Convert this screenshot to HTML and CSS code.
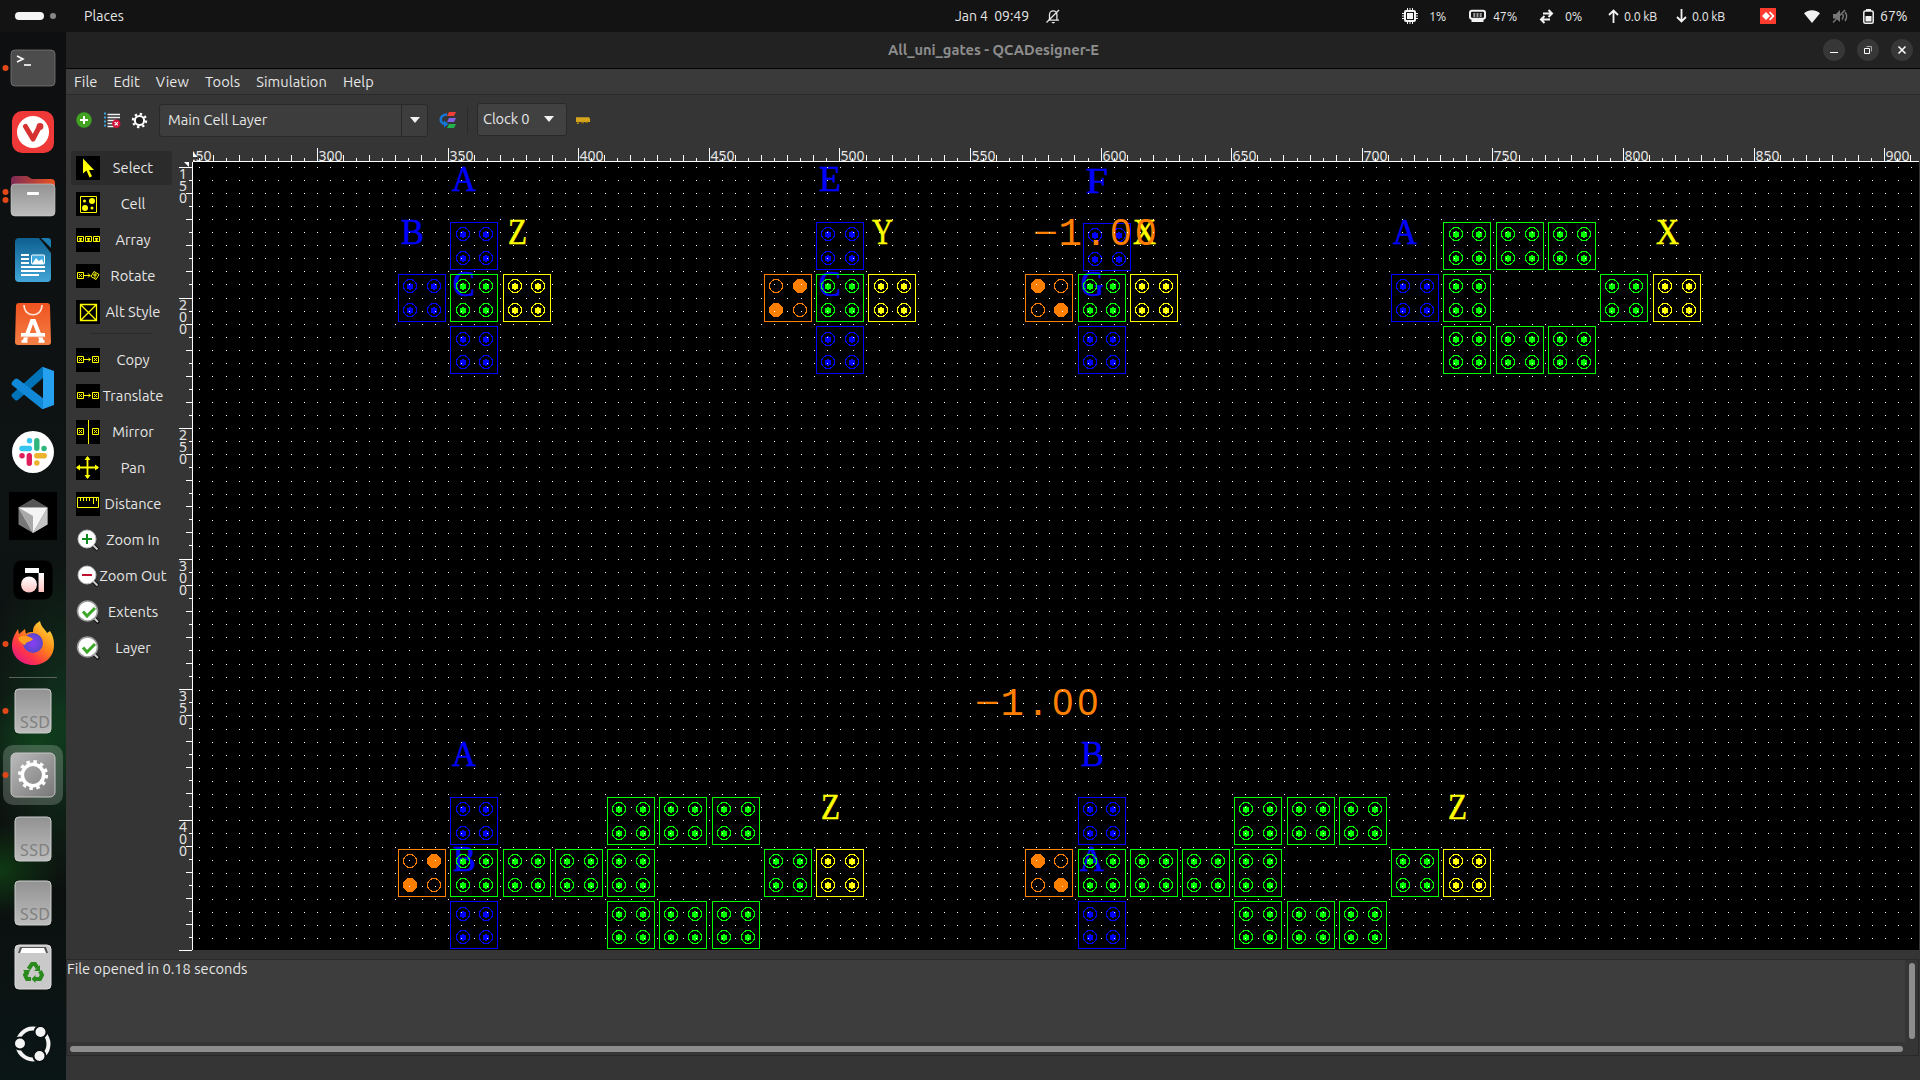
FILE: index.html
```html
<!DOCTYPE html>
<html lang="en">
<head>
<meta charset="utf-8">
<title>All_uni_gates - QCADesigner-E</title>
<link rel="stylesheet" href="styles.css">
</head>
<body>
<header class="topbar">
  <div class="top-left"><span class="pill"></span><span class="ws-dot"></span><span class="places">Places</span></div>
  <div class="top-center"><span class="clock">Jan 4 &nbsp;09:49</span>
    <svg width="16" height="16" viewBox="0 0 16 16" fill="none" stroke="#e8e8e8" stroke-width="1.3"><path d="M3 12.2h11M4.5 11.5V6.5a3.7 3.7 0 0 1 7.4 0v5M1.5 14.5L14 2"/><path d="M6.5 14h3.5a1.8 1.8 0 0 1-3.5 0z" fill="#e8e8e8" stroke="none"/></svg>
  </div>
  <div class="top-right">
    <svg class="i-cpu" width="16" height="16" viewBox="0 0 16 16"><path d="M5.5 0v16M8 0v16M10.5 0v16M0 5.5h16M0 8h16M0 10.5h16" stroke="#f2f2f2" stroke-width="1"/><rect x="2" y="2" width="12" height="12" rx="2" fill="#f2f2f2"/><rect x="4.5" y="4.5" width="7" height="7" fill="#f2f2f2" stroke="#131313"/></svg>
    <span class="t-cpu">1%</span>
    <svg class="i-mem" width="17" height="14" viewBox="0 0 17 14"><rect x="1" y="1.8" width="15" height="8" rx="2" fill="none" stroke="#f2f2f2" stroke-width="2"/><path d="M2.5 9.5h12V13h-12z" fill="#f2f2f2"/><path d="M5.3 4v4M8.5 4v4M11.7 4v4" stroke="#999" stroke-width="2"/></svg>
    <span class="t-mem">47%</span>
    <svg class="i-swap" width="15" height="15" viewBox="0 0 15 15" fill="none" stroke="#f2f2f2" stroke-width="2"><path d="M4 4.5h9M9.5 1L13 4.5 9.5 8M11 10.5H2M5.5 7L2 10.500 5.500 14"/></svg>
    <span class="t-swap">0%</span>
    <svg class="i-up" width="11" height="14" viewBox="0 0 11 14" fill="none" stroke="#f2f2f2" stroke-width="1.8"><path d="M5.500 14V1.500M1 6l4.500-4.500L10 6"/></svg>
    <span class="t-up">0.0 kB</span>
    <svg class="i-down" width="11" height="14" viewBox="0 0 11 14" fill="none" stroke="#f2f2f2" stroke-width="1.800"><path d="M5.500 0v12.500M1 8l4.500 4.500L10 8"/></svg>
    <span class="t-down">0.0 kB</span>
    <svg class="i-any" width="16" height="16" viewBox="0 0 16 16"><rect width="16" height="16" fill="#ff3b30"/><path d="M2 8l4-4 4 4-4 4zM9 4.500l1.300-1L14.500 8l-4.200 4.500-1.300-1L12 8z" fill="#fff"/></svg>
    <svg class="i-wifi" width="16" height="13" viewBox="0 0 16 13"><path d="M8 13L0 3.200C4.500-.8 11.500-.8 16 3.200z" fill="#f2f2f2"/></svg>
    <svg class="i-vol" width="16" height="14" viewBox="0 0 16 14" fill="none" stroke="#777" stroke-width="1.400"><path d="M1 5h3l4-4v12L4 9.500H1z" fill="#777" stroke="none"/><path d="M1 13.500L13 1M10 10.500c1.500-2 1.500-4 .5-5.500M13 12c2-3 2-6.500 0-9"/></svg>
    <svg class="i-bat" width="11" height="15" viewBox="0 0 11 15"><rect x=".8" y="2" width="9.400" height="12.200" rx="1.500" fill="none" stroke="#f2f2f2" stroke-width="1.500"/><path d="M3 0h5v2H3zM2.500 7h6v5.500h-6z" fill="#f2f2f2"/></svg>
    <span class="t-bat">67%</span>
  </div>
</header>
<div class="desktop">
<nav class="dock">
  <svg class="app" viewBox="0 0 66 64"><circle cx="5.500" cy="32" r="3" fill="#e0481a"/><rect x="11" y="14" width="44" height="36" rx="4" fill="#4c4c4c" stroke="#777" stroke-width=".8"/><path d="M17 20l6 3-6 3" fill="none" stroke="#fff" stroke-width="1.600"/><path d="M24 29h7" stroke="#fff" stroke-width="1.600"/></svg>
  <svg class="app" viewBox="0 0 66 64"><rect x="12" y="11" width="42" height="42" rx="10" fill="#ef3939"/><circle cx="33" cy="32" r="16" fill="#fff"/><path d="M25.500 26.500L33 39l6-11.500" fill="none" stroke="#d63232" stroke-width="5" stroke-linecap="round" stroke-linejoin="round"/><circle cx="40" cy="26.500" r="3.400" fill="#d63232"/></svg>
  <svg class="app" viewBox="0 0 66 64"><defs><linearGradient id="fo"><stop offset="0" stop-color="#7d2a55"/><stop offset="1" stop-color="#e9541f"/></linearGradient><linearGradient id="gr" x2="0" y2="1"><stop offset="0" stop-color="#929292"/><stop offset="1" stop-color="#bdbdbd"/></linearGradient></defs><circle cx="5.500" cy="28" r="3" fill="#e0481a"/><circle cx="5.500" cy="36" r="3" fill="#e0481a"/><path d="M11 16q0-4 4-4h12l5 3h19q4 0 4 4v12H11z" fill="url(#fo)"/><rect x="11" y="20" width="44" height="32" rx="4" fill="url(#gr)" stroke="#ccc" stroke-width=".6"/><rect x="27" y="28" width="12" height="3" rx="1" fill="#fff"/></svg>
  <svg class="app" viewBox="0 0 66 64"><defs><linearGradient id="wr" x2="0" y2="1"><stop offset="0" stop-color="#0d608f"/><stop offset="1" stop-color="#42a5d8"/></linearGradient></defs><path d="M15 14q0-4 4-4h20l12 15v25q0 4-4 4H19q-4 0-4-4z" fill="url(#wr)"/><path d="M41 10h7q3 0 3 3v7z" fill="#1d7cb0"/><path d="M21 27h8M21 31h8M21 35h8M21 39h24M21 43h24M21 47h18" stroke="#fff" stroke-width="2"/><rect x="31.500" y="27" width="13" height="9" rx="1" fill="#3fa9e0" stroke="#fff"/><path d="M32 36l4-6 3 3 3-2 2 5z" fill="#fff"/></svg>
  <svg class="app" viewBox="0 0 66 64"><defs><linearGradient id="st" x2="0" y2="1"><stop offset="0" stop-color="#ef5320"/><stop offset="1" stop-color="#f47f45"/></linearGradient></defs><path d="M19 11h28q3 0 3 3l1 36q0 3-3 3H18q-3 0-3-3l1-36q0-3 3-3z" fill="url(#st)"/><path d="M24 13c0 13 18 13 18 0" fill="none" stroke="#ffe5d8" stroke-width="1.600"/><path d="M24.500 49.500L32 29h2l8 20.500" fill="none" stroke="#fff" stroke-width="4"/><path d="M21 43h24" stroke="#fff" stroke-width="4"/><path d="M20 45h26" stroke="#ff8a5e" stroke-width=".8"/><path d="M21.500 49.500h6M38.500 49.500h6" stroke="#fff" stroke-width="2.500"/></svg>
  <svg class="app" viewBox="0 0 66 64"><path d="M12 41l3 3q1 1 3 0L44 21V11h-2L12 38q-1 1 0 3z" fill="#0072b8"/><path d="M12 26l3-3q1-1 3 0L44 43v10h-2L12 29q-1-1 0-3z" fill="#1289d8"/><path d="M43 11l11 4v34l-11 4z" fill="#26a1f0"/></svg>
  <svg class="app" viewBox="0 0 66 64"><circle cx="33" cy="32" r="21" fill="#fff"/><g stroke-width="5.400" stroke-linecap="round"><path d="M22 28.500h7.500M29.500 20.800h.1" stroke="#36c5f0"/><path d="M36.800 20.800v7.500M44 28.500h.1" stroke="#2eb67d"/><path d="M36.800 35.800h7.500M36.800 43h.1" stroke="#ecb22e"/><path d="M29.300 35.800v7.500M22 35.800h.1" stroke="#e01e5a"/></g></svg>
  <svg class="app" viewBox="0 0 66 64"><rect x="9" y="8" width="48" height="48" fill="#000"/><path d="M33 15l14.500 8.500v17L33 49l-14.500-8.500v-17z" fill="#777"/><path d="M33 15l14.500 8.500h-29z" fill="#555"/><path d="M18.500 23.500H47.500L33 49z" fill="#f4f4f4"/><path d="M18.500 23.500L33 32v17z" fill="#a9a9a9"/><path d="M47.500 23.500v17L33 49z" fill="#c4c4c4"/></svg>
  <svg class="app" viewBox="0 0 66 64"><defs><linearGradient id="pa" x2="0" y2="1"><stop offset="0" stop-color="#fff"/><stop offset="1" stop-color="#ffc3c0"/></linearGradient></defs><rect x="13.500" y="12.500" width="39" height="39" rx="8" fill="#000"/><path d="M25 20h14v5H25z" fill="#fff"/><circle cx="29" cy="36.500" r="8" fill="url(#pa)"/><path d="M38.500 25h5.500v19h-5.500z" fill="url(#pa)"/></svg>
  <svg class="app" viewBox="0 0 66 64"><defs><linearGradient id="ff" x1="1" y1="0" x2=".2" y2="1"><stop offset="0" stop-color="#fff04a"/><stop offset=".45" stop-color="#ff8a16"/><stop offset=".75" stop-color="#ff3647"/><stop offset="1" stop-color="#e31587"/></linearGradient><radialGradient id="fg"><stop offset="0" stop-color="#8a3ff5"/><stop offset="1" stop-color="#5a47c8"/></radialGradient></defs><circle cx="5.500" cy="32" r="3" fill="#e0481a"/><path d="M12 34c0-8 3-12 6-17l1 5 6-5 1 5c2-2 5-2 7-2 0-5 2-8 7-11 1 6 5 8 7 12l3-2c3 4 4 9 4 14 0 12-9 20-21 20S12 44 12 34z" fill="url(#ff)"/><circle cx="33" cy="31" r="10" fill="url(#fg)"/><path d="M18 26c5-4 11-2 15 1-2 3-7 2-8 6-3-1-6-4-7-7z" fill="#ff9d1e"/></svg>
  <span class="dock-line"></span>
  <svg class="app ssd run" viewBox="0 0 66 64"><circle cx="5.500" cy="32" r="3" fill="#e0481a"/><rect x="15" y="10" width="36" height="44" rx="4" fill="url(#gr)" stroke="#ccc"/><text x="20" y="49" textLength="30">SSD</text></svg>
  <svg class="app" viewBox="0 0 66 64"><defs><linearGradient id="se" x2="1" y2="1"><stop offset="0" stop-color="#bbb"/><stop offset="1" stop-color="#777"/></linearGradient></defs><rect x="3" y="2" width="60" height="60" rx="10" fill="#fff" fill-opacity=".2"/><circle cx="5.500" cy="32" r="3" fill="#e0481a"/><rect x="11" y="10" width="44" height="44" rx="5" fill="url(#se)" stroke="#c5c5c5"/><circle cx="33" cy="32" r="13.500" fill="none" stroke="#fff" stroke-width="3" stroke-dasharray="3.500 3.570"/><circle cx="33" cy="32" r="10.700" fill="none" stroke="#fff" stroke-width="3.600"/></svg>
  <svg class="app ssd" viewBox="0 0 66 64"><rect x="15" y="10" width="36" height="44" rx="4" fill="url(#gr)" stroke="#ccc"/><text x="20" y="49" textLength="30">SSD</text></svg>
  <svg class="app ssd" viewBox="0 0 66 64"><rect x="15" y="10" width="36" height="44" rx="4" fill="url(#gr)" stroke="#ccc"/><text x="20" y="49" textLength="30">SSD</text></svg>
  <svg class="app" viewBox="0 0 66 64"><rect x="15" y="10" width="36" height="44" rx="4" fill="#c9c9c9" stroke="#ddd"/><path d="M18 18l2-6h26l2 6z" fill="#555"/><path d="M20 18l2-5h22l2 5z" fill="#fff"/><g fill="none" stroke="#2b8a1e" stroke-width="4"><path d="M28.500 34l3.500-5h3l2.500 4"/><path d="M40 36l2 4-2 4h-5"/><path d="M31 44h-4l-2-4 2-4"/></g><path d="M40 30v6h-6zM35.500 40v8l-4-4zM23 35h7l-2 6z" fill="#2b8a1e"/></svg>
  <svg class="ubuntu" width="66" height="64" viewBox="0 0 66 64"><circle cx="33" cy="32" r="15.500" fill="none" stroke="#f4f4f4" stroke-width="4"/><g fill="#f4f4f4" stroke="#0b1112" stroke-width="2"><circle cx="20" cy="31.500" r="6"/><circle cx="40.500" cy="20" r="6"/><circle cx="39.500" cy="44" r="6"/></g></svg>
</nav>
<main class="window">
  <div class="titlebar"><span class="title">All_uni_gates - QCADesigner-E</span>
    <div class="win-buttons">
      <span class="wb"><svg width="22" height="22" viewBox="0 0 22 22"><path d="M7 13.500h8" stroke="#fff"/></svg></span>
      <span class="wb"><svg width="22" height="22" viewBox="0 0 22 22" fill="none"><path d="M9.500 7.500h5v5" stroke="#aaa"/><path d="M7.500 9.500h5v5h-5z" stroke="#fff"/></svg></span>
      <span class="wb"><svg width="22" height="22" viewBox="0 0 22 22"><path d="M7.500 7.500l7 7M14.500 7.500l-7 7" stroke="#fff" stroke-width="1.500"/></svg></span>
    </div>
  </div>
  <div class="menubar"><span>File</span><span>Edit</span><span>View</span><span>Tools</span><span>Simulation</span><span>Help</span></div>
  <div class="toolbar">
    <svg width="16" height="16" viewBox="0 0 16 16"><circle cx="8" cy="8" r="7.700" fill="#41a322"/><path d="M8 4v8M4 8h8" stroke="#fff" stroke-width="2"/></svg>
    <svg class="tb-list" width="17" height="16" viewBox="0 0 17 16"><path d="M3.500 2.500H16M3.500 5.500H16M3.500 8.500H12M3.500 11.500H10M3.500 14.500H10" stroke="#f0f0f0" stroke-width="1.600"/><path d="M0 1.500h2M0 5.500h2M0 9.500h2M0 13.500h2" stroke="#3aa4dc" stroke-width="2"/><circle cx="12.300" cy="11.800" r="4.200" fill="#d2143c"/><path d="M10.700 10.200l3.200 3.200M13.900 10.200l-3.200 3.200" stroke="#fff" stroke-width="1.200"/></svg>
    <svg class="tb-gear" width="17" height="17" viewBox="0 0 17 17" fill="none"><circle cx="8.500" cy="8.500" r="6.600" stroke="#fff" stroke-width="2.200" stroke-dasharray="2.400 2.784"/><circle cx="8.500" cy="8.500" r="4.600" fill="#222" stroke="#fff" stroke-width="2"/></svg>
    <div class="combo"><span class="combo-text">Main Cell Layer</span><span class="combo-arrow"><i class="tri"></i></span></div>
    <svg class="tb-layers" width="17" height="16" viewBox="0 0 17 16"><path d="M10 0h7l-2 4H8z" fill="#ef3f36"/><path d="M10 6h7l-2 4H8z" fill="#8560e8"/><path d="M10 12h7l-2 4H8z" fill="#22b14c"/><path d="M8 2.500C0 3 0 11 6 12" fill="none" stroke="#1677d8" stroke-width="2.600"/><path d="M5 8.500l4.500 3.500L5 15.500z" fill="#1677d8"/></svg>
    <span class="tb-sep"></span>
    <div class="clock-btn"><span>Clock 0</span><i class="tri"></i></div>
    <svg class="tb-yellow" width="15" height="9" viewBox="0 0 16 9"><path d="M0 1h14l1 2v3h-3v1h-2V6H8v1.500H6V6H3v2H1V6H0z" fill="#d6a51c"/><path d="M1 6.500h2M5 6.500h3M10 6.500h3" stroke="#7c5c10"/></svg>
  </div>
  <div class="work">
    <aside class="tools">
      <div class="tool active"><svg viewBox="0 0 24 24"><path class="bg" d="M0 0h24v24H0z"/><path d="M7 2.500v15l3.500-3 3 7 2.500-1.200-3-6.300H18z" fill="#ff0"/></svg><span>Select</span></div>
      <div class="tool"><svg viewBox="0 0 24 24"><path class="bg" d="M0 0h24v24H0z"/><path class="ln" d="M4.500 4.500h16v16h-16z"/><g fill="#ff0"><circle cx="16" cy="9" r="3"/><circle cx="9" cy="16" r="3"/><circle cx="8.500" cy="9" r="1.500"/><circle cx="16" cy="16" r="1.500"/></g></svg><span>Cell</span></div>
      <div class="tool"><svg viewBox="0 0 24 24"><path class="bg" d="M0 0h24v24H0z"/><path class="ln" d="M1.500 8.500h6v5h-6zM9.500 8.500h6v5h-6zM17.500 8.500h6v5h-6zM3 10.500h3M3 12h3M4.500 10v3M11 10.500h3M11 12h3M12.500 10v3M19 10.500h3M19 12h3M20.500 10v3"/></svg><span>Array</span></div>
      <div class="tool"><svg viewBox="0 0 24 24"><path class="bg" d="M0 0h24v24H0z"/><path class="ln" d="M1.500 8.500h6v6h-6zM3 10l3 3M6 10l-3 3M8 11.500h6M12 9.500l2 2-2 2M18 7.500l5 3-3 5-5-3zM17 11h4M19 9v5"/></svg><span>Rotate</span></div>
      <div class="tool"><svg viewBox="0 0 24 24"><path class="bg" d="M0 0h24v24H0z"/><path class="ln thick" d="M4.500 4.500h16v16h-16zM5 5l15 15M20 5L5 20"/></svg><span>Alt Style</span></div>
      <hr>
      <div class="tool"><svg viewBox="0 0 24 24"><path class="bg" d="M0 0h24v24H0z"/><path class="ln" d="M1.500 8.500h6v6h-6zM16.500 8.500h6v6h-6zM3 10l3 3M6 10l-3 3M18 10l3 3M21 10l-3 3M8 11.500h6.500M12.500 10l2 1.500-2 1.500"/></svg><span>Copy</span></div>
      <div class="tool"><svg viewBox="0 0 24 24"><path class="bg" d="M0 0h24v24H0z"/><path class="ln" d="M1.500 8.500h6v6h-6zM16.500 8.500h6v6h-6zM3 10l3 3M6 10l-3 3M18 10l3 3M21 10l-3 3M8 11.500h6.500M12.500 10l2 1.500-2 1.500"/></svg><span>Translate</span></div>
      <div class="tool"><svg viewBox="0 0 24 24"><path class="bg" d="M0 0h24v24H0z"/><path class="ln" d="M1.500 8.500h6v6h-6zM16.500 8.500h6v6h-6zM3 10l3 3M6 10l-3 3M18 10l3 3M21 10l-3 3M12.500 0v24"/></svg><span>Mirror</span></div>
      <div class="tool"><svg viewBox="0 0 24 24"><path class="bg" d="M0 0h24v24H0z"/><path d="M11.500 1v21M1 11.500h21" stroke="#ff0" stroke-width="1.800"/><path d="M11.500 0l3 4h-6zM11.500 23l3-4h-6zM0 11.500l4-3v6zM23 11.500l-4-3v6z" fill="#ff0"/></svg><span>Pan</span></div>
      <div class="tool"><svg viewBox="0 0 24 24"><path class="bg" d="M0 0h24v24H0z"/><path class="ln" d="M1.500 5.500h21v10h-21zM4.500 6v3M7.500 6v3M10.500 6v3M13.500 6v3M17.500 6v6M20.500 6v3"/></svg><span>Distance</span></div>
      <div class="tool"><svg viewBox="0 0 24 24"><path d="M16 16l6 6" stroke="#111" stroke-width="4"/><path d="M16 16l5.500 5.500" stroke="#ccc" stroke-width="2"/><circle cx="11" cy="11" r="9" fill="#fff" stroke="#bbb"/><path d="M11 6v10M6 11h10" stroke="#128a22" stroke-width="2"/></svg><span>Zoom In</span></div>
      <div class="tool"><svg viewBox="0 0 24 24"><path d="M16 16l6 6" stroke="#111" stroke-width="4"/><path d="M16 16l5.500 5.500" stroke="#ccc" stroke-width="2"/><circle cx="11" cy="11" r="9" fill="#fff" stroke="#bbb"/><path d="M6 11h10" stroke="#c01030" stroke-width="2"/></svg><span>Zoom Out</span></div>
      <div class="tool"><svg viewBox="0 0 24 24"><path d="M16 16l7 7" stroke="#111" stroke-width="4"/><path d="M16 16l6 6" stroke="#ccc" stroke-width="2"/><circle cx="11.500" cy="11" r="10" fill="#fff" stroke="#999" stroke-width="1.500"/><path d="M7 11.500l4 4.500 8-8" fill="none" stroke="#3ea62a" stroke-width="3"/></svg><span>Extents</span></div>
      <div class="tool"><svg viewBox="0 0 24 24"><path d="M16 16l7 7" stroke="#111" stroke-width="4"/><path d="M16 16l6 6" stroke="#ccc" stroke-width="2"/><circle cx="11.500" cy="11" r="10" fill="#fff" stroke="#999" stroke-width="1.500"/><path d="M7 11.500l4 4.500 8-8" fill="none" stroke="#3ea62a" stroke-width="3"/></svg><span>Layer</span></div>
    </aside>
    <svg class="design" id="design" width="1744" height="806" viewBox="175 145 1744 806"></svg>
  </div>
  <section class="log">
    <div class="log-row"><p>File opened in 0.18 seconds</p><div class="vtrack"><span></span></div></div>
    <div class="htrack"><span></span></div>
  </section>
</main>
</div>
<script src="design.js"></script>
</body>
</html>
```
FILE: design.js
```js
const BLUE = '#0000ff', GREEN = '#00ff00', YELLOW = '#ffff00', ORANGE = '#ff8000';
const out = [];

out.push('<rect x="193" y="162" width="1726" height="788" fill="#000"/>');
out.push('<clipPath id="hclip"><rect x="193" y="145" width="1726" height="18"/></clipPath>');

// Rulers
const ticks = [];
const hlabels = [], vlabels = [];
for (let k = -10; k <= 122; k++) {
  const x = Math.floor(317.5 + k * 13.06);
  if (x < 193 || x > 1918) continue;
  const h = k % 10 === 0 ? 13 : k % 2 === 0 ? 6 : 3;
  ticks.push(`M${x + 0.5} ${161 - h}V161`);
}
for (let u = 250; u <= 900; u += 50) {
  const x = Math.floor(317.5 + (u - 300) * 2.612);
  hlabels.push(`<text x="${x + 1.5}" y="161">${u}</text>`);
}
for (let k = 0; k <= 60; k++) {
  const y = Math.floor(167.5 + k * 13.05);
  const w = k % 10 === 0 ? 13 : k % 2 === 0 ? 6 : 3;
  ticks.push(`M${192 - w} ${y + 0.5}H192`);
  if (k % 10 === 0 && k < 60) {
    String(150 + k * 5).split('').forEach((d, i) =>
      vlabels.push(`<text x="183" y="${y + 12 + i * 12}" text-anchor="middle">${d}</text>`));
  }
}
out.push(`<g class="rl" clip-path="url(#hclip)">${hlabels.join('')}</g><g class="rl">${vlabels.join('')}</g>`);
out.push(`<path d="${ticks.join('')}M193 161.500H1919M192.500 162V950" stroke="#fff" fill="none"/>`);
out.push('<path d="M184 162h5v5zM193 152l5 5h-5z" fill="#fff"/>');

// Cell labels: letter, left, width, baseline, colour
function letter(c, x, w, y, col) {
  out.push(`<text class="lt" x="${x}" y="${y}" textLength="${w}" lengthAdjust="spacingAndGlyphs" fill="${col}" stroke="${col}">${c}</text>`);
}
[['A', 452, 24, 191], ['B', 401, 23, 244], ['C', 453, 22, 296], ['E', 819, 22, 191], ['C', 819, 22, 296],
 ['F', 1086, 22, 193], ['G', 1081, 23, 296], ['A', 1393, 24, 244], ['A', 452, 24, 766], ['B', 453, 23, 871],
 ['B', 1081, 23, 766], ['A', 1080, 24, 871]].forEach(l => letter(...l, BLUE));
[['Z', 508, 19, 244], ['Y', 872, 21, 244], ['X', 1133, 23, 244], ['X', 1656, 23, 244], ['Z', 821, 19, 819],
 ['Z', 1448, 19, 819]].forEach(l => letter(...l, YELLOW));

// Cells: inner offsets of the quantum dots depend on sub-pixel snapping
const colOffsets = { 450: [13, 36], 503: [12, 35], 868: [13, 36], 1025: [13, 36], 1078: [12, 35], 1443: [13, 36] };
const rowOffsets = { 326: [13, 36], 901: [13, 36] };
function cell(x, y, col, fixed) {
  const xs = colOffsets[x] || [12, 36], ys = rowOffsets[y] || [12, 36];
  let s = `<rect x="${x + 0.5}" y="${y + 0.5}" width="47" height="47"/>`;
  ys.forEach((oy, j) => xs.forEach((ox, i) => {
    const cx = x + ox, cy = y + oy;
    if (fixed !== undefined) {
      const filled = (i ^ j) === fixed;
      s += `<circle cx="${cx}" cy="${cy}" r="6.500" ${filled ? `fill="${col}"` : ''}/>`;
    } else {
      s += `<circle cx="${cx}" cy="${cy}" r="6.500"/><circle cx="${cx}" cy="${cy + 0.5}" r="3.200" fill="${col}" stroke="none"/>`;
    }
  }));
  out.push(`<g class="cell" stroke="${col}">${s}</g>`);
}
[[450, 222], [398, 274], [450, 326], [816, 222], [816, 326], [1083, 223], [1078, 326], [1391, 274],
 [450, 797], [450, 901], [1078, 797], [1078, 901]].forEach(c => cell(...c, BLUE));
[[450, 274], [816, 274], [1078, 274], [1443, 222], [1496, 222], [1548, 222], [1443, 274], [1600, 274],
 [1443, 326], [1496, 326], [1548, 326],
 [607, 797], [659, 797], [712, 797], [450, 849], [503, 849], [555, 849], [607, 849], [764, 849],
 [607, 901], [659, 901], [712, 901],
 [1234, 797], [1287, 797], [1339, 797], [1078, 849], [1130, 849], [1182, 849], [1234, 849], [1391, 849],
 [1234, 901], [1287, 901], [1339, 901]].forEach(c => cell(...c, GREEN));
[[503, 274], [868, 274], [1130, 274], [1653, 274], [816, 849], [1443, 849]].forEach(c => cell(...c, YELLOW));
cell(764, 274, ORANGE, 1);
cell(1025, 274, ORANGE, 0);
cell(398, 849, ORANGE, 1);
cell(1025, 849, ORANGE, 0);

// Polarization values
function polarization(x, y) {
  out.push(`<g fill="${ORANGE}"><text class="ph" x="${x - 13}" y="${y - 4}" textLength="45" lengthAdjust="spacingAndGlyphs">-</text><text class="pm" x="${x + 22.500}" y="${y}">1</text><text class="pd" x="${x + 53.500}" y="${y}">.</text><text class="pz" x="${x + 74.500} ${x + 99.500}" y="${y}">00</text></g>`);
}
polarization(1036, 245);
polarization(978, 714.5);

// Grid points
const pts = [];
for (let j = -10; j <= 49; j++) {
  const y = Math.floor(298.02 + j * 183 / 14);
  for (let i = -16; i <= 115; i++) pts.push(`M${Math.floor(409 + i * 13.0685)} ${y}h1v1h-1z`);
}
out.push(`<path d="${pts.join('')}" fill="#fff" shape-rendering="crispEdges"/>`);
document.getElementById('design').innerHTML = out.join('');
```
FILE: styles.css
```css
* { box-sizing: border-box; }
body {
  margin: 0; width: 1920px; height: 1080px; overflow: hidden;
  background: #353535; color: #e6e6e6;
  font: 14.67px/20px "Ubuntu", "Noto Sans", sans-serif;
  display: flex; flex-direction: column;
}
svg { display: block; flex: none; }
.topbar { height: 32px; background: #131313; display: grid; grid-template-columns: 900px 1fr 520px; align-items: center; flex: none; font-size: 14px; }
.top-left, .top-center, .top-right { display: flex; align-items: center; white-space: nowrap; }
.topbar span { position: relative; top: -.5px; }
.pill { width: 29px; height: 8px; border-radius: 4px; background: #f4f4f4; margin-left: 15px; }
.ws-dot { width: 6px; height: 6px; border-radius: 3px; background: #888; margin-left: 6px; }
.places { margin-left: 28px; letter-spacing: .05px; }
.top-center { padding-left: 55px; gap: 16px; letter-spacing: -.05px; }
.top-right { font-size: 12.500px; }
.top-right span { letter-spacing: -.2px; }
.i-cpu { margin-left: 2px; }
.t-cpu { margin-left: 11px; width: 19px; }
.i-mem { margin-left: 21px; }
.t-mem { margin-left: 7px; width: 26px; }
.i-swap { margin-left: 20px; }
.t-swap { margin-left: 11px; width: 19px; }
.i-up { margin-left: 24px; }
.t-up { margin-left: 5px; width: 36px; }
.i-down { margin-left: 16px; }
.t-down { margin-left: 5px; width: 36px; }
.i-any { margin-left: 32px; }
.i-wifi { margin-left: 28px; }
.i-vol { margin-left: 12px; }
.i-bat { margin-left: 15px; }
.top-right .t-bat { margin-left: 6px; font-size: 14px; letter-spacing: 0; }
.desktop { flex: 1; display: flex; min-height: 0; }
.dock {
  width: 66px; display: flex; flex-direction: column; padding-top: 4px; flex: none;
  background:
    radial-gradient(ellipse 55px 60px at 36px 712px, #10401c 0%, transparent 100%),
    radial-gradient(ellipse 60px 45px at 0 838px, #0f3a14 0%, transparent 100%),
    radial-gradient(ellipse 90px 170px at 66px 690px, #10331e 0%, transparent 100%),
    linear-gradient(#0e0f10, #0e1313 45%, #0c100e 80%, #0a1516);
}
.app { width: 66px; height: 64px; }
.dock-line { height: 1px; margin: 1px 9px; background: #5a625c; flex: none; }
.ssd text { font: 16px "Noto Sans", sans-serif; fill: #808080; }
.ubuntu { margin-top: 13px; }
.window { flex: 1; min-width: 0; display: flex; flex-direction: column; background: #353535; }
.titlebar { height: 37px; background: #222; border-bottom: 1px solid #050505; display: flex; align-items: center; justify-content: flex-end; flex: none; }
.title { flex: 1; padding-left: 822px; color: #8d8d8d; font-weight: 700; letter-spacing: -.02px; white-space: nowrap; }
.win-buttons { display: flex; gap: 12px; padding-right: 7px; }
.wb { width: 22px; height: 22px; border-radius: 11px; background: #373737; }
.menubar { height: 26px; background: #3a3a3a; border-bottom: 1px solid #2b2b2b; display: flex; align-items: center; gap: 16px; padding-left: 8px; flex: none; letter-spacing: .08px; }
.toolbar { height: 50px; display: flex; align-items: center; padding-left: 10px; flex: none; }
.tb-list { margin-left: 12px; }
.tb-gear { margin-left: 10px; }
.combo { margin-left: 11px; width: 269px; height: 33px; border: 1px solid #292929; border-radius: 3px; background: #3d3d3d; display: flex; align-items: center; }
.combo-text { flex: 1; padding-left: 8px; }
.combo-arrow { width: 26px; height: 31px; border-left: 1px solid #292929; display: grid; place-items: center; }
.tri { display: block; border: 5px solid transparent; border-top: 6px solid #f2f2f2; border-bottom: 0; }
.tb-layers { margin-left: 11px; }
.tb-sep { width: 1px; height: 27px; background: #2a2a2a; margin-left: 11px; }
.clock-btn { margin: 0 0 2px 9px; width: 90px; height: 33px; border: 1px solid #292929; border-radius: 3px; background: #414141; display: flex; align-items: center; padding-left: 5px; gap: 14px; white-space: nowrap; letter-spacing: -.1px; }
.tb-yellow { margin-left: 9px; }
.work { display: flex; height: 806px; flex: none; }
.tools { width: 109px; padding: 6px 3px 0 5px; flex: none; }
.tool { width: 101px; height: 34px; margin-bottom: 2px; padding-left: 5px; border-radius: 4px; display: flex; align-items: center; }
.tool svg { width: 24px; height: 24px; }
.tool span { width: 80px; margin: 0 -8px 0 -7px; text-align: center; white-space: nowrap; flex: none; }
.tool.active { background: #2b2b2b; }
.tools hr { width: 63px; height: 1px; border: 0; background: #2a2a2a; margin: 4px 0 7px 19px; padding: 0; }
.tools hr + .tool { margin-top: 9px; }
.bg { fill: #000; }
.ln { fill: none; stroke: #ff0; stroke-width: 1; }
.thick { stroke-width: 1.3; }
.rl { font: 14px "Noto Sans", sans-serif; fill: #e4e4e4; }
.lt { font: 35px "Liberation Serif", serif; stroke-width: .5px; }
.cell { fill: none; shape-rendering: crispEdges; }
.ph { font: 30px "Liberation Mono", monospace; }
.pm { font: 39px "Liberation Mono", monospace; }
.pd { font: 46px "Liberation Sans", sans-serif; }
.pz { font: 37px "Liberation Sans", sans-serif; }
.log { margin: 8px 1px 0 0; height: 97px; border: 1px solid #292929; background: #353535; display: flex; flex-direction: column; flex: none; }
.log-row { flex: 1; display: flex; }
.log p { flex: 1; margin: 0; background: #3d3d3d; line-height: 18px; }
.vtrack { width: 13px; padding: 3px 0 0 4px; }
.vtrack span { display: block; width: 6px; height: 76px; border-radius: 3px; background: #8d8d8d; }
.htrack { height: 13px; padding: 4px 15px 0 3px; }
.htrack span { display: block; height: 6px; border-radius: 3px; background: #8d8d8d; }
```
